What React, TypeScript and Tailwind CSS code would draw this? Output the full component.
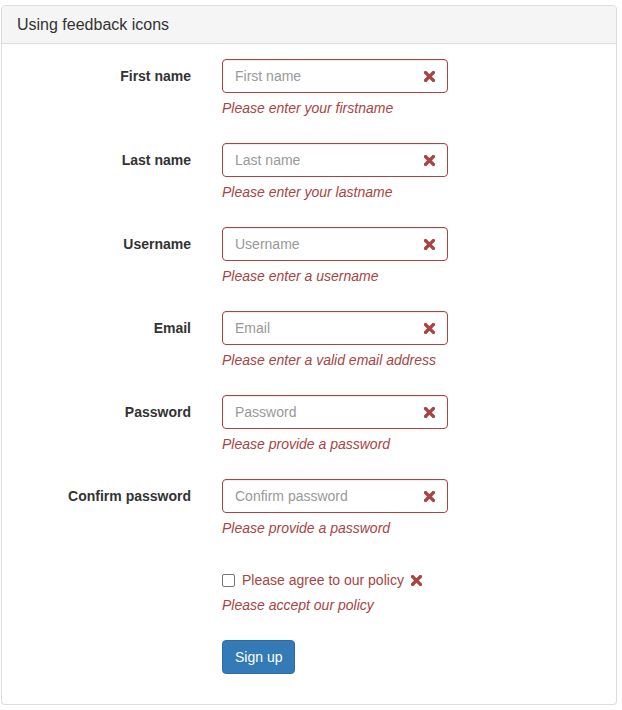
import React from "react";

const XIcon = ({ className = "" }: { className?: string }) => (
  <svg width="11" height="11" viewBox="0 0 11 11" className={className} aria-hidden="true">
    <path d="M1.6 1.6 L9.4 9.4 M9.4 1.6 L1.6 9.4" stroke="#a94442" strokeWidth="3.4" strokeLinecap="square" />
  </svg>
);

const fields = [
  { label: "First name", ph: "First name", err: "Please enter your firstname", type: "text" },
  { label: "Last name", ph: "Last name", err: "Please enter your lastname", type: "text" },
  { label: "Username", ph: "Username", err: "Please enter a username", type: "text" },
  { label: "Email", ph: "Email", err: "Please enter a valid email address", type: "text" },
  { label: "Password", ph: "Password", err: "Please provide a password", type: "password" },
  { label: "Confirm password", ph: "Confirm password", err: "Please provide a password", type: "password" },
];

export default function App() {
  return (
    <div
      className="bg-white pt-[5px] pl-[1px] text-[14px] leading-[20px] text-[#333]"
      style={{ fontFamily: '"Liberation Sans", Arial, Helvetica, sans-serif' }}
    >
      <div className="w-[616px] border border-[#ddd] rounded-[4px] bg-white shadow-[0_1px_1px_rgba(0,0,0,0.05)]">
        <div className="bg-[#f5f5f5] border-b border-[#ddd] rounded-t-[3px] px-[15px] py-[10px] text-[16px] leading-[17px] text-[#333]">
          Using feedback icons
        </div>
        <div className="p-[15px]">
          {fields.map((f) => (
            <div key={f.label} className="flex mb-[15px]">
              <label className="w-[174px] shrink-0 text-right font-bold pt-[7px] leading-[20px]">{f.label}</label>
              <div className="ml-[31px] w-[226px]">
                <div className="relative">
                  <input
                    type={f.type}
                    placeholder={f.ph}
                    className="block w-[226px] h-[34px] border border-[#a94442] rounded-[4px] pl-[12px] pr-[42px] py-[6px] text-[14px] text-[#555] placeholder:text-[#999] outline-none shadow-[inset_0_1px_1px_rgba(0,0,0,0.075)]"
                  />
                  <span className="absolute right-0 top-0 w-[34px] h-[34px] flex items-center justify-center pointer-events-none">
                    <XIcon className="-ml-[3px]" />
                  </span>
                </div>
                <div className="mt-[5px] mb-[10px] italic text-[#a94442]">{f.err}</div>
              </div>
            </div>
          ))}
          <div className="flex mb-[15px]">
            <div className="w-[174px] shrink-0" />
            <div className="ml-[31px] w-[226px]">
              <div className="pt-[7px] min-h-[27px]">
                <label className="flex items-center text-[#a94442] leading-[20px] whitespace-nowrap">
                  <input type="checkbox" className="w-[13px] h-[13px] m-0 mr-[7px] appearance-none border border-[#767676] rounded-[2px] bg-white shrink-0" />
                  <span>Please agree to our policy</span>
                  <XIcon className="ml-[7px]" />
                </label>
              </div>
              <div className="mt-[5px] mb-[10px] italic text-[#a94442]">Please accept our policy</div>
            </div>
          </div>
          <div className="flex mb-[15px]">
            <div className="w-[174px] shrink-0" />
            <div className="ml-[31px]">
              <button className="h-[34px] px-[12px] bg-[#337ab7] border border-[#2e6da4] rounded-[4px] text-white text-[14px] leading-[20px]">
                Sign up
              </button>
            </div>
          </div>
        </div>
      </div>
    </div>
  );
}
